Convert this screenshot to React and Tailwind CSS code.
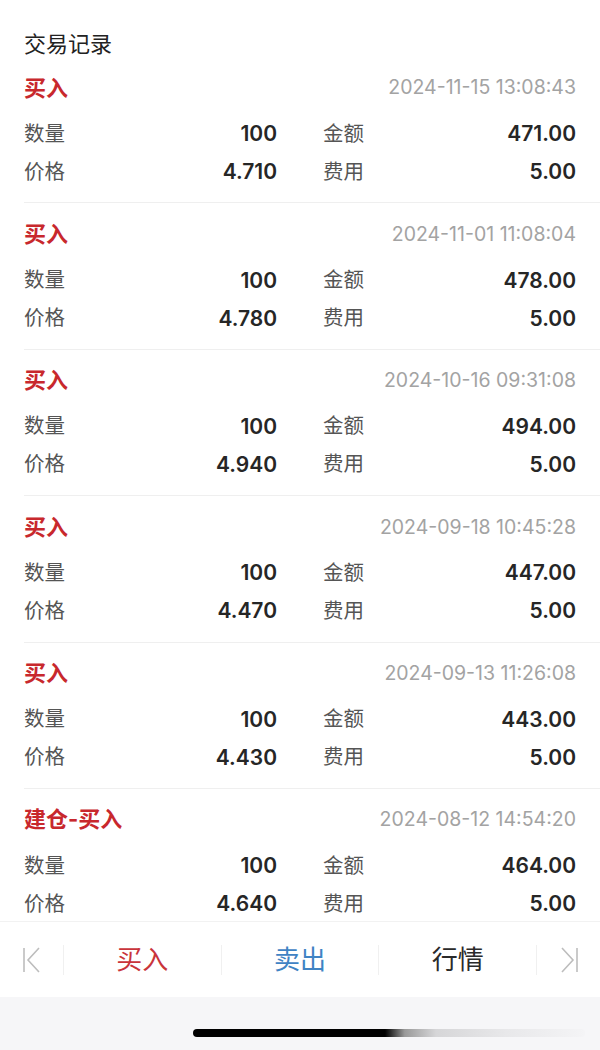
import React from "react";

const records = [
  { type: "买入", time: "2024-11-15 13:08:43", qty: "100", price: "4.710", amount: "471.00", fee: "5.00" },
  { type: "买入", time: "2024-11-01 11:08:04", qty: "100", price: "4.780", amount: "478.00", fee: "5.00" },
  { type: "买入", time: "2024-10-16 09:31:08", qty: "100", price: "4.940", amount: "494.00", fee: "5.00" },
  { type: "买入", time: "2024-09-18 10:45:28", qty: "100", price: "4.470", amount: "447.00", fee: "5.00" },
  { type: "买入", time: "2024-09-13 11:26:08", qty: "100", price: "4.430", amount: "443.00", fee: "5.00" },
  { type: "建仓-买入", time: "2024-08-12 14:54:20", qty: "100", price: "4.640", amount: "464.00", fee: "5.00" },
];

function Cell({ label, value }) {
  return (
    <div className="h-[38px] flex items-center justify-between">
      <span className="text-[20.5px] text-[#555]">{label}</span>
      <span className="text-[21px] font-semibold text-[#262626]">{value}</span>
    </div>
  );
}

function Record({ r }) {
  return (
    <div className="ml-[24px] pr-[24px] pt-3 pb-[11.4px] border-b border-[#efefef]">
      <div className="h-[38px] flex items-center justify-between">
        <span className="text-[22px] font-bold text-[#c8282d]">{r.type}</span>
        <span className="text-[19.5px] text-[#a3a3a3]">{r.time}</span>
      </div>
      <div className="mt-[8px] grid grid-cols-[253px_1fr] gap-x-[46px]">
        <Cell label="数量" value={r.qty} />
        <Cell label="金额" value={r.amount} />
        <Cell label="价格" value={r.price} />
        <Cell label="费用" value={r.fee} />
      </div>
    </div>
  );
}

function Sep() {
  return <div className="w-px h-[30px] bg-[#f0f0f0]" />;
}

export default function App() {
  return (
    <div
      className="w-[600px] h-[1050px] bg-white flex flex-col overflow-hidden"
      style={{ fontFamily: 'Inter, "Noto Sans CJK SC", sans-serif' }}
    >
      <div className="h-[921px] overflow-hidden">
        <div className="h-[57px] pl-[24px] pt-[30px]">
          <h1 className="text-[22px] leading-[28px] text-[#222]">交易记录</h1>
        </div>
        {records.map((r, i) => (
          <Record key={i} r={r} />
        ))}
      </div>

      {/* bottom toolbar */}
      <div className="h-[76px] border-t border-[#f2f2f2] flex items-center">
        <div className="w-[63px] flex justify-center">
          <svg width="20" height="26" viewBox="0 0 20 26" fill="none" stroke="#bdbdbd" strokeWidth="1.6">
            <path d="M2 1v24" />
            <path d="M17 1L6 13l11 12" />
          </svg>
        </div>
        <Sep />
        <div className="flex-1 text-center text-[26px] text-[#c9343b]">买入</div>
        <Sep />
        <div className="flex-1 text-center text-[26px] text-[#3f83c4]">卖出</div>
        <Sep />
        <div className="flex-1 text-center text-[26px] text-[#2a2a2a]">行情</div>
        <Sep />
        <div className="w-[63px] flex justify-center">
          <svg width="20" height="26" viewBox="0 0 20 26" fill="none" stroke="#bdbdbd" strokeWidth="1.6">
            <path d="M3 1l11 12L3 25" />
            <path d="M18 1v24" />
          </svg>
        </div>
      </div>

      {/* home indicator area */}
      <div className="flex-1 bg-[#f6f6f8] pt-[32px]">
        <div className="ml-[193px] w-[392px] h-[8px] rounded-full bg-[linear-gradient(to_right,#000_0%,#000_49%,#999_54%,#d6d6d8_62%,#e8e8ea_80%,#f4f4f6_100%)]" />
      </div>
    </div>
  );
}
